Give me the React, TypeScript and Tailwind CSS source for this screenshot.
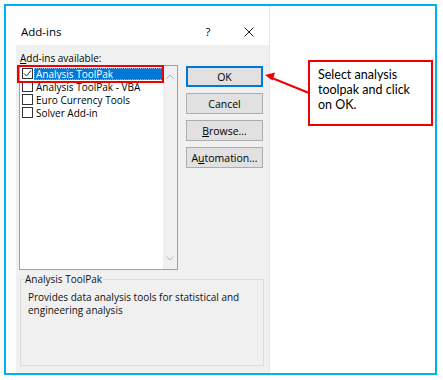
import React from 'react';

const ui = "font-['Open_Sans','Noto_Sans',sans-serif]";

function Chevron({ up }: { up?: boolean }) {
  return (
    <svg width="8" height="5" viewBox="0 0 8 5" className="block">
      <path
        d={up ? 'M0.5 4.5L4 1L7.5 4.5' : 'M0.5 0.5L4 4L7.5 0.5'}
        fill="none"
        stroke="#b4b4b4"
        strokeWidth="1"
      />
    </svg>
  );
}

function ListItem({ label, checked, selected }: { label: string; checked?: boolean; selected?: boolean }) {
  return (
    <div className="h-[13px] flex items-center pl-[2px]">
      <div className="w-[11px] h-[11px] border border-[#333] bg-white flex items-center justify-center">
        {checked && (
          <svg width="9" height="9" viewBox="0 0 9 9">
            <path d="M1 4.5L3.5 7L8 1.5" fill="none" stroke="#222" strokeWidth="1" />
          </svg>
        )}
      </div>
      <div
        className={
          selected
            ? 'ml-[1px] h-[12px] w-[129px] bg-[#0078d7] text-white flex items-center pl-[2px] outline-1 outline-dotted outline-[#7fb8ea] -outline-offset-1'
            : 'ml-[1px] h-[12px] flex items-center pl-[2px] text-black'
        }
      >
        {label}
      </div>
    </div>
  );
}

function Button({ children, primary }: { children: React.ReactNode; primary?: boolean }) {
  return (
    <div
      className={
        'h-[21px] w-[77px] flex items-center justify-center bg-[#e1e1e1] text-black ' +
        (primary ? 'border-2 border-[#0078d7]' : 'border border-[#adadad]')
      }
    >
      {children}
    </div>
  );
}

export default function App() {
  return (
    <div className={`w-[443px] h-[380px] bg-white p-[4px] relative ${ui}`}>
      <div className="w-[433px] h-[371px] border-2 border-[#00b0f0] flex">
        {/* dialog */}
        <div className="ml-[10px] w-[254px] flex flex-col border-r border-[#e6e6e6]">
          <div className="h-[39px] flex items-center pt-[13px] pl-[5px] text-[11.5px] text-black">
            <span>Add-ins</span>
            <span className="ml-auto w-[24px] text-center">?</span>
            <span className="ml-[17px] w-[24px] mr-[8px] flex justify-center">
              <svg width="10" height="10" viewBox="0 0 10 10">
                <path d="M0.5 0.5L9.5 9.5M9.5 0.5L0.5 9.5" stroke="#222" strokeWidth="1" />
              </svg>
            </span>
          </div>
          <div className="flex-1 bg-[#f0f0f0] pl-[3px] pt-[6px] text-[10px] leading-[12px]">
            <div className="h-[14px] pl-[1px] flex items-center text-black">
              <span>
                <span className="underline">A</span>dd-ins available:
              </span>
            </div>
            <div className="flex">
              <div className="relative w-[159px] h-[205px] border border-[#a0a0a0] bg-white flex">
                <div className="flex-1 pt-[1px]">
                  <ListItem label="Analysis ToolPak" checked selected />
                  <ListItem label="Analysis ToolPak - VBA" />
                  <ListItem label="Euro Currency Tools" />
                  <ListItem label="Solver Add-in" />
                </div>
                <div className="w-[15px] bg-[#f0f0f0] flex flex-col items-center justify-between py-[8px]">
                  <Chevron up />
                  <Chevron />
                </div>
                <div className="absolute left-[-3px] top-[-1px] w-[147px] h-[18px] border-2 border-[#f00000]" />
              </div>
              <div className="ml-[8px] mt-[1px] flex flex-col gap-[6px] text-[10.5px]">
                <Button primary>OK</Button>
                <Button>Cancel</Button>
                <Button>
                  <span>
                    <span className="underline">B</span>rowse...
                  </span>
                </Button>
                <Button>
                  <span>
                    A<span className="underline">u</span>tomation...
                  </span>
                </Button>
              </div>
            </div>
            <div className="relative mt-[9px] ml-[1px] w-[244px] h-[87px] border border-[#dcdcdc] pt-[11px] pl-[7px] text-[#111] leading-[13px]">
              <span className="absolute left-[4px] -top-[7px] bg-[#f0f0f0] pr-[1px] leading-[12px]">Analysis ToolPak</span>
              <div>Provides data analysis tools for statistical and</div>
              <div>engineering analysis</div>
            </div>
          </div>
        </div>
        {/* callout */}
        <div className="ml-[38px] mt-[54px] w-[125px] h-[66px] border-2 border-[#f00000] pl-[8px] pt-[5px] text-[12.5px] leading-[15px] text-black font-['Lato',sans-serif]">
          <div>Select analysis</div>
          <div>toolpak and click</div>
          <div>on OK.</div>
        </div>
      </div>
      <svg className="absolute left-0 top-0 pointer-events-none" width="443" height="380">
        <line x1="309" y1="93" x2="272" y2="78" stroke="#f00000" strokeWidth="2" />
        <path d="M265 75L275 72.5L272.5 80.5Z" fill="#f00000" />
      </svg>
    </div>
  );
}
